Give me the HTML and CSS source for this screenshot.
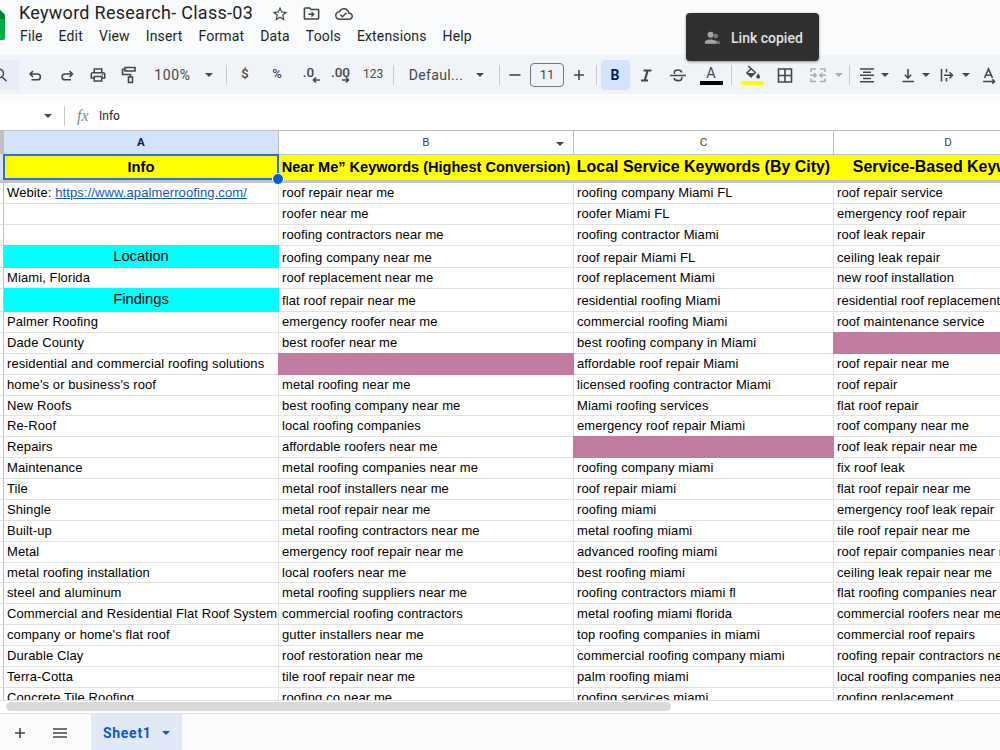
FILE: index.html
```
<!DOCTYPE html>
<html lang="en">
<head>
    <meta charset="UTF-8">
    <meta name="viewport" content="width=device-width, initial-scale=1.0">
    <title>Keyword Research- Class-03</title>
    <link rel="stylesheet" href="styles.css">
</head>
<body>
    <!-- Title and menus -->
    <header>
        <svg class="logo" viewBox="0 0 5 32"><path d="M0 0L5 5V28Q5 30 3 30H0z" fill="#00ac47"/><path d="M0 0L5 5V9H0z" fill="#00832d"/></svg>
        <div class="head-text">
            <div class="title-row">
                <h1>Keyword Research- Class-03</h1>
                <svg class="star" viewBox="0 0 24 24"><path d="M22 9.24l-7.19-.62L12 2 9.19 8.63 2 9.24l5.46 4.73L5.82 21 12 17.27 18.18 21l-1.63-7.03L22 9.24zM12 15.4l-3.76 2.27 1-4.28-3.32-2.88 4.38-.38L12 6.1l1.71 4.04 4.38.38-3.32 2.88 1 4.28L12 15.4z"/></svg>
                <svg class="folder" viewBox="0 0 24 24"><path d="M20 6h-8l-2-2H4c-1.1 0-2 .9-2 2v12c0 1.1.9 2 2 2h16c1.1 0 2-.9 2-2V8c0-1.1-.9-2-2-2zm0 12H4V6h5.17l2 2H20v10zm-8-1l4-4-4-4v3H8v2h4z"/></svg>
                <svg class="cloud" viewBox="0 0 24 24"><path d="M19.35 10.04C18.67 6.59 15.64 4 12 4 9.11 4 6.6 5.64 5.35 8.04 2.34 8.36 0 10.91 0 14c0 3.31 2.69 6 6 6h13c2.76 0 5-2.24 5-5 0-2.64-2.05-4.78-4.65-4.96zM19 18H6c-2.21 0-4-1.79-4-4 0-2.05 1.53-3.76 3.56-3.97l1.07-.11.5-.95C8.08 7.14 9.94 6 12 6c2.62 0 4.88 1.86 5.39 4.43l.3 1.5 1.53.11c1.56.1 2.78 1.41 2.78 2.96 0 1.65-1.35 3-3 3zm-9-3.82l-2.09-2.09L6.5 13.5 10 17l6.01-6.01-1.41-1.41z"/></svg>
            </div>
            <nav>
                <a>File</a>
                <a>Edit</a>
                <a>View</a>
                <a>Insert</a>
                <a>Format</a>
                <a>Data</a>
                <a>Tools</a>
                <a>Extensions</a>
                <a>Help</a>
            </nav>
        </div>
    </header>

    <!-- Toolbar -->
    <div class="toolbar">
        <span class="search"><svg viewBox="0 0 16 16"><path d="M2 1.5a5 5 0 1 1 0 9.500M6 9.500l6 5.500" class="line"/></svg></span>
        <svg class="icon" viewBox="0 0 18 18"><path d="M7 5L4 8l3 3M4 8h7.500a2.900 2.900 0 0 1 0 5.800H5.500" class="line"/></svg>
        <svg class="icon" viewBox="0 0 18 18"><path d="M11.500 5l3 3-3 3M14.500 8H7a2.900 2.900 0 0 0 0 5.800h6" class="line"/></svg>
        <svg class="icon" viewBox="0 0 24 24"><path d="M19 8h-1V3H6v5H5c-1.660 0-3 1.340-3 3v6h4v4h12v-4h4v-6c0-1.660-1.340-3-3-3zM8 5h8v3H8V5zm8 12v2H8v-4h8v2zm2-2v-2H6v2H4v-4c0-.55.45-1 1-1h14c.55 0 1 .45 1 1v4h-2z"/><circle cx="18" cy="11.500" r="1"/></svg>
        <svg class="icon" viewBox="0 0 18 18"><path d="M5 1.500h10v3.500H5zM5 3.200H2.500V8.500H10.500V11M8.500 11h4v5.500H8.500z" class="line"/></svg>
        <span class="zoom">100%</span>
        <i class="caret"></i>
        <i class="sep"></i>
        <span class="small">$</span>
        <span class="small">%</span>
        <span class="decimal left">.0<svg viewBox="0 0 8 6"><path d="M8 3H1.500M4 .5L1.500 3L4 5.500" class="line"/></svg></span>
        <span class="decimal">.00<svg viewBox="0 0 8 6"><path d="M0 3h6.500M4 .5L6.500 3L4 5.500" class="line"/></svg></span>
        <span class="digits">123</span>
        <i class="sep"></i>
        <span class="font-name">Defaul...</span>
        <i class="caret"></i>
        <i class="sep"></i>
        <svg class="icon" viewBox="0 0 18 18"><path d="M3.500 9h11" class="line"/></svg>
        <span class="size-box">11</span>
        <svg class="icon" viewBox="0 0 18 18"><path d="M4 9h10M9 4v10" class="line"/></svg>
        <i class="sep"></i>
        <b class="bold">B</b>
        <svg class="icon" viewBox="0 0 18 18"><path d="M6.500 4.500h8M4 14.500h7M10.700 4.500L7.700 14.500" class="line thick"/></svg>
        <svg class="icon" viewBox="0 0 18 18"><path d="M1 9.500h16M12.700 6.500c-.3-1.600-1.700-2.500-3.700-2.500S5.300 5 5.300 6.500c0 .5.2.9.5 1.200M5 12c.4 1.700 1.900 2.600 4 2.600s3.800-.9 3.800-2.400c0-.5-.1-.8-.3-1.100" class="line"/></svg>
        <span class="color-tool black">A</span>
        <i class="sep"></i>
        <span class="color-tool yellow"><svg viewBox="0 0 18 16"><path d="M4.500 1L12 8 7.500 12.500 3 8.500 7.500 4" class="line"/><path d="M3 8.500h9L7.500 13zM15 9s2 2.300 2 3.600a2 2 0 0 1-4 0C13 11.300 15 9 15 9z"/></svg></span>
        <svg class="icon" viewBox="0 0 18 18"><path d="M2.500 3h13v13h-13zM9 3v13M2.500 9.500h13" class="line"/></svg>
        <svg class="icon faded" viewBox="0 0 18 18"><path d="M7 3H2V6M2 12.500v3h5M11 3h5V6M16 12.500v3h-5M1 9.200h5.500M4.800 7L7 9.200l-2.200 2.200M17 9.200h-5.500M13.200 7L11 9.200l2.200 2.200" class="line"/></svg>
        <i class="caret faded"></i>
        <i class="sep"></i>
        <svg class="icon" viewBox="0 0 18 18"><path d="M2 3h14M5 6.200h8M2 9.300h14M5 12.500h8M2 15.700h14" class="line"/></svg>
        <i class="caret"></i>
        <svg class="icon" viewBox="0 0 18 18"><path d="M3.500 15.500h11.500M9 3v9M5.800 8.800L9 12l3.200-3.200" class="line"/></svg>
        <i class="caret"></i>
        <svg class="icon" viewBox="0 0 18 18"><path d="M3.500 3v12.500M8.500 3v3.500M8.500 12v3.500M6 9.300h8M11.500 6.300l3 3-3 3" class="line"/></svg>
        <i class="caret"></i>
        <svg class="icon" viewBox="0 0 18 18"><path d="M4.500 12L8.500 3l4 9M5.800 9.300h5.400M3 15.500h11.500M12.300 13.300l2.200 2.200-2.200 2.200" class="line"/></svg>
    </div>

    <!-- Formula bar -->
    <div class="formula">
        <i class="caret"></i>
        <i class="sep"></i>
        <em>fx</em>
        <span>Info</span>
    </div>

    <!-- Spreadsheet -->
    <main>
        <div class="row letters"><i></i><span class="selected">A</span><span class="b-head">B<i class="caret"></i></span><span>C</span><span>D</span></div>
        <div class="row heading"><i></i><span class="active">Info</span><span class="near">Near Me” Keywords (Highest Conversion)</span><span>Local Service Keywords (By City)</span><span>Service-Based Keywords</span></div>
        <div class="freeze"></div>
        <div class="row"><i></i><span>Webite: <a>https://www.apalmerroofing.com/</a></span><span>roof repair near me</span><span>roofing company Miami FL</span><span>roof repair service</span></div>
        <div class="row"><i></i><span></span><span>roofer near me</span><span>roofer Miami FL</span><span>emergency roof repair</span></div>
        <div class="row"><i></i><span></span><span>roofing contractors near me</span><span>roofing contractor Miami</span><span>roof leak repair</span></div>
        <div class="row tall"><i></i><span class="cyan">Location</span><span>roofing company near me</span><span>roof repair Miami FL</span><span>ceiling leak repair</span></div>
        <div class="row"><i></i><span>Miami, Florida</span><span>roof replacement near me</span><span>roof replacement Miami</span><span>new roof installation</span></div>
        <div class="row tall"><i></i><span class="cyan">Findings</span><span>flat roof repair near me</span><span>residential roofing Miami</span><span>residential roof replacement</span></div>
        <div class="row"><i></i><span>Palmer Roofing</span><span>emergency roofer near me</span><span>commercial roofing Miami</span><span>roof maintenance service</span></div>
        <div class="row"><i></i><span>Dade County</span><span>best roofer near me</span><span>best roofing company in Miami</span><span class="pink"></span></div>
        <div class="row"><i></i><span>residential and commercial roofing solutions</span><span class="pink"></span><span>affordable roof repair Miami</span><span>roof repair near me</span></div>
        <div class="row"><i></i><span>home's or business's roof</span><span>metal roofing near me</span><span>licensed roofing contractor Miami</span><span>roof repair</span></div>
        <div class="row"><i></i><span>New Roofs</span><span>best roofing company near me</span><span>Miami roofing services</span><span>flat roof repair</span></div>
        <div class="row"><i></i><span>Re-Roof</span><span>local roofing companies</span><span>emergency roof repair Miami</span><span>roof company near me</span></div>
        <div class="row"><i></i><span>Repairs</span><span>affordable roofers near me</span><span class="pink"></span><span>roof leak repair near me</span></div>
        <div class="row"><i></i><span>Maintenance</span><span>metal roofing companies near me</span><span>roofing company miami</span><span>fix roof leak</span></div>
        <div class="row"><i></i><span>Tile</span><span>metal roof installers near me</span><span>roof repair miami</span><span>flat roof repair near me</span></div>
        <div class="row"><i></i><span>Shingle</span><span>metal roof repair near me</span><span>roofing miami</span><span>emergency roof leak repair</span></div>
        <div class="row"><i></i><span>Built-up</span><span>metal roofing contractors near me</span><span>metal roofing miami</span><span>tile roof repair near me</span></div>
        <div class="row"><i></i><span>Metal</span><span>emergency roof repair near me</span><span>advanced roofing miami</span><span>roof repair companies near me</span></div>
        <div class="row"><i></i><span>metal roofing installation</span><span>local roofers near me</span><span>best roofing miami</span><span>ceiling leak repair near me</span></div>
        <div class="row"><i></i><span>steel and aluminum</span><span>metal roofing suppliers near me</span><span>roofing contractors miami fl</span><span>flat roofing companies near me</span></div>
        <div class="row"><i></i><span>Commercial and Residential Flat Roof System</span><span>commercial roofing contractors</span><span>metal roofing miami florida</span><span>commercial roofers near me</span></div>
        <div class="row"><i></i><span>company or home's flat roof</span><span>gutter installers near me</span><span>top roofing companies in miami</span><span>commercial roof repairs</span></div>
        <div class="row"><i></i><span>Durable Clay</span><span>roof restoration near me</span><span>commercial roofing company miami</span><span>roofing repair contractors near me</span></div>
        <div class="row"><i></i><span>Terra-Cotta</span><span>tile roof repair near me</span><span>palm roofing miami</span><span>local roofing companies near me</span></div>
        <div class="row"><i></i><span>Concrete Tile Roofing</span><span>roofing co near me</span><span>roofing services miami</span><span>roofing replacement</span></div>
    </main>
    <div class="scroll"><div class="thumb"></div></div>

    <!-- Sheet tabs -->
    <footer>
        <svg class="plus" viewBox="0 0 18 18"><path d="M4 9h10M9 4v10" class="line"/></svg>
        <svg class="menu" viewBox="0 0 18 18"><path d="M2 5h14M2 9h14M2 13h14" class="line"/></svg>
        <div class="tab">Sheet1<i class="caret"></i></div>
    </footer>

    <div class="toast">
        <svg viewBox="0 0 18 16"><circle cx="12.500" cy="6" r="2.500" fill="#777"/><path d="M11 14v-2.500c3 -1.500 6 0 6 1.500v1z" fill="#777"/><circle cx="7" cy="4.500" r="3.200"/><path d="M1 14v-1.500C1 8.500 13 8.500 13 12.500V14z"/></svg>
        Link copied
    </div>
</body>
</html>
```
FILE: styles.css
```
* {
    box-sizing: border-box;
}

body {
    margin: 0;
    width: 1000px;
    height: 750px;
    overflow: hidden;
    position: relative;
    background-color: #f9fbfd;
    font-family: Roboto, "Liberation Sans", sans-serif;
    color: #1f1f1f;
}

svg {
    fill: #444746;
    flex-shrink: 0;
}

.line {
    fill: none;
    stroke: #444746;
    stroke-width: 1.6;
}

.thick {
    stroke-width: 2.2;
}

/* Title and menus */
header {
    display: flex;
    height: 55px;
}

.logo {
    width: 5px;
    height: 32px;
    margin-top: 10px;
}

.head-text {
    padding-left: 14px;
}

.title-row {
    display: flex;
    align-items: center;
    height: 27px;
}

h1 {
    margin: -2px 0 0;
    width: 252px;
    font-size: 18px;
    font-weight: 400;
    letter-spacing: 0.27px;
    white-space: nowrap;
}

.star {
    width: 18px;
    height: 18px;
}

.folder {
    width: 19px;
    height: 19px;
    margin-left: 13px;
}

.cloud {
    width: 18px;
    height: 18px;
    margin-left: 14px;
}

nav {
    display: flex;
    gap: 16px;
    padding-left: 1px;
    font-size: 14px;
    line-height: 18px;
    letter-spacing: 0.15px;
}

/* Toolbar */
.toolbar {
    display: grid;
    grid-template-columns: 19px 32px 31px 32px 30px 56px 17px 19px 18px 46px 17px 47px 18px 23px 61px 28px 10px 22px 42px 22px 12px 26px 36px 28px 38px 3px 38px 28px 38px 4px 17px 18px 18px 28px 7px 36px 2px 44px;
    align-items: center;
    justify-items: center;
    height: 39px;
    background-color: #f0f4f9;
    color: #444746;
    font-size: 14px;
}

.icon {
    width: 18px;
    height: 18px;
}

.search {
    width: 19px;
    height: 30px;
    padding: 7px 0 0;
    background-color: #e7ecf6;
}

.search svg {
    display: block;
    width: 14px;
    height: 16px;
    margin-left: -4px;
}

.caret {
    width: 0;
    height: 0;
    border: 4px solid transparent;
    border-top-color: #444746;
    border-bottom: 0;
}

.sep {
    width: 1px;
    height: 20px;
    background-color: #c7c9cc;
}

.faded {
    opacity: 0.4;
}

.zoom {
    padding-left: 1px;
    letter-spacing: 0.6px;
}

.small {
    margin-top: -2px;
    font-size: 13px;
    font-weight: 500;
}

.decimal {
    display: flex;
    flex-direction: column;
    align-items: flex-end;
    margin-top: 1px;
    font-size: 13.5px;
    font-weight: 500;
    line-height: 10px;
}

.decimal svg {
    width: 8px;
    height: 6px;
}

.left svg {
    margin-right: -6px;
}

.digits {
    font-size: 12px;
    margin-top: -1px;
}

.font-name {
    padding-left: 1px;
    letter-spacing: 0.35px;
}

.size-box {
    width: 34px;
    height: 24px;
    border: 1px solid #747775;
    border-radius: 4px;
    font-size: 13px;
    text-align: center;
    line-height: 22px;
}

.bold {
    width: 29px;
    height: 30px;
    border-radius: 4px;
    background-color: #d3e3fd;
    color: #041e49;
    text-align: center;
    line-height: 31px;
}

.color-tool {
    display: flex;
    flex-direction: column;
    align-items: center;
    width: 23px;
    height: 20px;
    font-size: 14.5px;
    line-height: 17px;
    border-bottom: 4px solid #000;
}

.yellow {
    border-color: #ff0;
}

.color-tool svg {
    width: 17px;
    height: 15px;
}

/* Formula bar */
.formula {
    display: flex;
    align-items: center;
    height: 36px;
    padding: 7px 0 0 44px;
    background: linear-gradient(#f9fbfd 7px, #fff 7px);
    font-size: 12px;
}

.formula .sep {
    margin-left: 12px;
}

.formula em {
    width: 34px;
    padding-left: 12px;
    color: #80868b;
    font-family: "Liberation Serif", serif;
    font-size: 16px;
}

/* Spreadsheet */
main {
    height: 571px;
    overflow: hidden;
    background-color: #fff;
    border-top: 1px solid #c0c0c0;
    border-bottom: 1px solid #e1e1e1;
    color: #000;
    font-family: "Liberation Sans", Arial, sans-serif;
    font-size: 13px;
    letter-spacing: 0.1px;
}

.row {
    display: grid;
    grid-template-columns: 4px 275px 295px 260px 229px;
    height: 20.88px;
}

.row > i {
    border-right: 1px solid #c0c0c0;
    border-bottom: 1px solid #e1e1e1;
}

.row > span {
    border-right: 1px solid #e1e1e1;
    border-bottom: 1px solid #e1e1e1;
    padding-left: 3px;
    line-height: 20px;
    white-space: nowrap;
    overflow: hidden;
}

.tall {
    height: 22.8px;
}

.tall > span {
    line-height: 24px;
}

/* Filled cells also cover the grid lines above and to the left */
.row > .cyan {
    margin-top: -1px;
    padding: 0;
    background-color: #0ff;
    border-color: #0ff;
    font-size: 14.7px;
    letter-spacing: 0;
    line-height: 23px;
    text-align: center;
}

.row > .pink {
    margin: -1px 0 0 -1px;
    background-color: #c27ba0;
    border-color: #c27ba0;
}

.row a {
    color: #1155cc;
    text-decoration: underline;
}

.letters {
    height: 24px;
}

.letters > i {
    background-color: #c0c0c0;
}

.letters > span {
    padding: 0;
    border-color: #c0c0c0;
    color: #444746;
    font-family: Roboto, sans-serif;
    font-size: 11.5px;
    line-height: 23px;
    text-align: center;
}

.letters .selected {
    background-color: #d3e3fd;
    color: #041e49;
    font-weight: 700;
}

.b-head .caret {
    float: right;
    margin: 11px 9px 0 -17px;
}

.heading {
    height: 24px;
    font-weight: 700;
    letter-spacing: 0;
}

.heading > i {
    background-color: #d3e3fd;
}

.heading > span {
    background-color: #ff0;
    border-color: #ff0;
    padding: 0;
    font-size: 15.95px;
    line-height: 24px;
    text-align: center;
}

.heading .near {
    font-size: 14.55px;
}

.heading .active {
    position: relative;
    overflow: visible;
    font-size: 14.7px;
}

/* Selection frame and its fill handle */
.active::before {
    content: "";
    position: absolute;
    inset: -1px -1px -1px -1px;
    border: 2px solid #2b6be4;
}

.active::after {
    content: "";
    position: absolute;
    z-index: 1;
    right: -6px;
    bottom: -6px;
    width: 10px;
    height: 10px;
    border: 1px solid #fff;
    border-radius: 50%;
    background-color: #0b57d0;
}

.freeze {
    height: 4px;
    background-color: #c3c3c3;
}

.scroll {
    height: 13px;
    padding: 1px 6px;
    background-color: #fff;
    border-bottom: 1px solid #e1e3e6;
}

.thumb {
    width: 665px;
    height: 9px;
    border-radius: 5px;
    background-color: #dadada;
}

/* Sheet tabs */
footer {
    display: flex;
    align-items: center;
    height: 38px;
}

.plus {
    width: 18px;
    height: 18px;
    margin-left: 11px;
}

.menu {
    width: 18px;
    height: 18px;
    margin-left: 22px;
}

.tab {
    display: flex;
    align-items: center;
    gap: 10px;
    width: 91px;
    height: 38px;
    margin-left: 22px;
    padding-left: 12px;
    background-color: #e1e9f7;
    color: #0b57d0;
    font-size: 14px;
    font-weight: 700;
    letter-spacing: 0.7px;
}

.tab .caret {
    border-top-color: #0b57d0;
}

/* Notification over the toolbar */
.toast {
    position: absolute;
    left: 686px;
    top: 13px;
    display: flex;
    align-items: center;
    gap: 10px;
    width: 133px;
    height: 48px;
    padding: 2px 0 0 18px;
    border-radius: 4px;
    background-color: #303030;
    box-shadow: 0 1px 3px rgba(0, 0, 0, 0.4);
    color: #e3e3e3;
    font-size: 14px;
    font-weight: 500;
}

.toast svg {
    width: 17px;
    height: 16px;
    fill: #a5a5a5;
}
```
